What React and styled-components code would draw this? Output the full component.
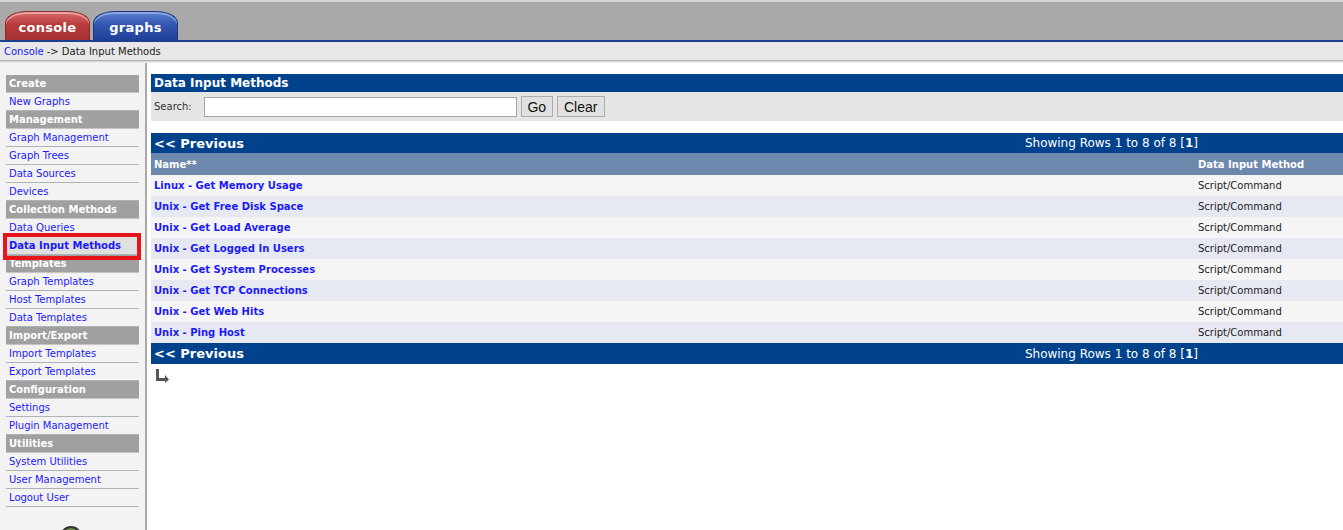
import React from 'react';
import styled, { createGlobalStyle } from 'styled-components';

const GlobalStyle = createGlobalStyle`
  body {
    margin: 0;
    font-family: "DejaVu Sans", Verdana, sans-serif;
    background: #fff;
  }
`;

const menu = [
  { title: 'Create', items: ['New Graphs'] },
  { title: 'Management', items: ['Graph Management', 'Graph Trees', 'Data Sources', 'Devices'] },
  { title: 'Collection Methods', items: ['Data Queries', 'Data Input Methods'] },
  { title: 'Templates', items: ['Graph Templates', 'Host Templates', 'Data Templates'] },
  { title: 'Import/Export', items: ['Import Templates', 'Export Templates'] },
  { title: 'Configuration', items: ['Settings', 'Plugin Management'] },
  { title: 'Utilities', items: ['System Utilities', 'User Management', 'Logout User'] },
];

const rows = [
  'Linux - Get Memory Usage',
  'Unix - Get Free Disk Space',
  'Unix - Get Load Average',
  'Unix - Get Logged In Users',
  'Unix - Get System Processes',
  'Unix - Get TCP Connections',
  'Unix - Get Web Hits',
  'Unix - Ping Host',
];

const Page = styled.div`
  width: 1343px;
  min-height: 530px;
  display: flex;
  flex-direction: column;
`;

const TopBar = styled.div`
  height: 38px;
  background: #a9a9a9;
  border-top: 2px solid #d6d6d6;
  display: flex;
  align-items: flex-end;
  gap: 3px;
  padding-left: 5px;
`;

const Tab = styled.div`
  width: 85px;
  height: 29px;
  box-sizing: border-box;
  border-radius: 22px 22px 0 0 / 12px 12px 0 0;
  border: 1px solid ${p => (p.$red ? '#8e2a2a' : '#1c357f')};
  border-bottom: none;
  box-shadow: inset 0 2px 0 ${p => (p.$red ? '#e9a3a3' : '#8ea6e0')};
  background: ${p =>
    p.$red
      ? 'linear-gradient(#d96b6b 0%, #b83d3d 45%, #a62f2f 100%)'
      : 'linear-gradient(#5d7fcf 0%, #3356b0 45%, #213f98 100%)'};
  color: #fff;
  font-weight: bold;
  font-size: 13px;
  letter-spacing: 0.3px;
  display: flex;
  align-items: center;
  justify-content: center;
  padding-top: 3px;
`;

const BlueLine = styled.div`
  height: 2px;
  background: #1e3f8e;
`;

const Crumbs = styled.div`
  height: 18px;
  background: #e8e8e8;
  font-size: 10px;
  color: #222;
  display: flex;
  align-items: center;
  padding-left: 4px;
  a { color: #1a1aff; text-decoration: none; margin-right: 3px; }
`;

const Shade = styled.div`
  height: 3px;
  background: linear-gradient(#a3a3a3, #d8d8d8, #f3f3f3);
`;

const Body = styled.div`
  flex: 1;
  display: flex;
`;

const Sidebar = styled.div`
  width: 133px;
  padding: 12px 6px 0 6px;
  background: #f3f3f3;
  border-right: 2px solid #a9a9a9;
  position: relative;
  min-height: 456px;
`;

const MenuHead = styled.div`
  height: 17px;
  border-bottom: 1px solid #c4c4c4;
  background: #a0a0a0;
  color: #fff;
  font-weight: bold;
  font-size: 10px;
  display: flex;
  align-items: center;
  padding-left: 3px;
`;

const MenuItem = styled.div`
  height: 17px;
  border-bottom: 1px solid #aeb3b8;
  background: ${p => (p.$active ? '#e0e0e0' : 'transparent')};
  color: #1a1aff;
  font-weight: ${p => (p.$active ? 'bold' : 'normal')};
  font-size: 10px;
  display: flex;
  align-items: center;
  padding-left: 3px;
`;

const Highlight = styled.div`
  position: absolute;
  left: 3px;
  top: 170px;
  width: 130px;
  height: 19px;
  border: 4px solid #e8141c;
`;

const Logo = styled.div`
  position: absolute;
  left: 60px;
  top: 463px;
  width: 18px;
  height: 18px;
  border-radius: 50%;
  border: 2px solid #333;
  background: #6b8f4a;
`;

const Main = styled.div`
  flex: 1;
  padding: 11px 0 0 4px;
  display: flex;
  flex-direction: column;
`;

const TitleBar = styled.div`
  height: 18px;
  background: #00438c;
  color: #fff;
  font-weight: bold;
  font-size: 12px;
  display: flex;
  align-items: center;
  padding-left: 3px;
`;

const SearchRow = styled.div`
  height: 29px;
  background: #e5e5e5;
  display: flex;
  align-items: center;
  padding-left: 3px;
  font-size: 10px;
  color: #333;
`;

const SearchInput = styled.input`
  width: 313px;
  height: 20px;
  box-sizing: border-box;
  border: 1px solid #a6a6a6;
  margin-left: 12px;
  margin-right: 4px;
`;

const Btn = styled.button`
  width: ${p => p.$w}px;
  height: 21px;
  box-sizing: border-box;
  border: 1px solid #adadad;
  background: #e1e1e1;
  font-family: "Liberation Sans", Arial, sans-serif;
  font-size: 14px;
  color: #111;
  padding: 0;
  margin-right: 4px;
`;

const Table = styled.div`
  margin-top: 12px;
`;

const NavBar = styled.div`
  height: ${p => p.$h}px;
  background: #00438c;
  color: #fff;
  display: grid;
  grid-template-columns: 1fr auto 145px;
  align-items: center;
  padding-left: 3px;
  font-size: 12px;
  strong { font-size: 13px; }
`;

const HeadRow = styled.div`
  height: 22px;
  background: #6d88ad;
  color: #fff;
  font-weight: bold;
  font-size: 10px;
  display: grid;
  grid-template-columns: 1fr 145px;
  align-items: center;
  padding-left: 3px;
`;

const Row = styled.div`
  height: 21px;
  background: ${p => (p.$alt ? '#e7e9f2' : '#f5f5f5')};
  display: grid;
  grid-template-columns: 1fr 145px;
  align-items: center;
  padding-left: 3px;
  font-size: 10px;
  a { color: #1a1aff; font-weight: bold; text-decoration: none; }
  span { color: #222; }
`;

const ArrowWrap = styled.div`
  padding: 4px 0 0 4px;
`;

function Nav({ h }) {
  return (
    <NavBar $h={h}>
      <strong>&lt;&lt; Previous</strong>
      <span>Showing Rows 1 to 8 of 8 [<b>1</b>]</span>
      <span />
    </NavBar>
  );
}

export default function App() {
  return (
    <Page>
      <GlobalStyle />
      <TopBar>
        <Tab $red>console</Tab>
        <Tab>graphs</Tab>
      </TopBar>
      <BlueLine />
      <Crumbs>
        <a href="#">Console</a> -&gt; Data Input Methods
      </Crumbs>
      <Shade />
      <Body>
        <Sidebar>
          {menu.map(sec => (
            <React.Fragment key={sec.title}>
              <MenuHead>{sec.title}</MenuHead>
              {sec.items.map(it => (
                <MenuItem key={it} $active={it === 'Data Input Methods'}>{it}</MenuItem>
              ))}
            </React.Fragment>
          ))}
          <Highlight />
          <Logo />
        </Sidebar>
        <Main>
          <TitleBar>Data Input Methods</TitleBar>
          <SearchRow>
            Search:
            <SearchInput type="text" />
            <Btn $w={32}>Go</Btn>
            <Btn $w={48}>Clear</Btn>
          </SearchRow>
          <Table>
            <Nav h={20} />
            <HeadRow>
              <span>Name**</span>
              <span>Data Input Method</span>
            </HeadRow>
            {rows.map((r, i) => (
              <Row key={r} $alt={i % 2 === 1}>
                <a href="#">{r}</a>
                <span>Script/Command</span>
              </Row>
            ))}
            <Nav h={21} />
          </Table>
          <ArrowWrap>
            <svg width="14" height="14" viewBox="0 0 14 14">
              <path d="M1 0h3v9h6V6l4 4.5-4 3.5v-2H1z" fill="#555" />
            </svg>
          </ArrowWrap>
        </Main>
      </Body>
    </Page>
  );
}
